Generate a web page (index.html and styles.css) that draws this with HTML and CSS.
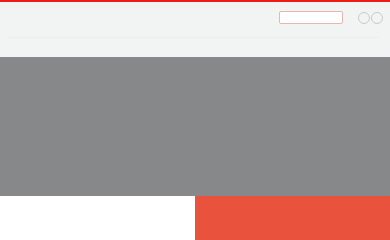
FILE: index.html
```html
<!DOCTYPE html>
<html>
<head>
<meta charset="utf-8">
<link rel="stylesheet" href="styles.css">
</head>
<body>
<header class="header">
  <div class="topbar">
    <input class="search" type="text" aria-label="Search">
    <div class="toggles">
      <span class="circle"></span>
      <span class="circle"></span>
    </div>
  </div>
  <div class="divider"></div>
</header>
<section class="hero"></section>
<section class="split">
  <div class="left"></div>
  <div class="right"></div>
</section>
</body>
</html>
```
FILE: styles.css
```css
* { box-sizing: border-box; }
html, body { margin: 0; padding: 0; }
body {
  width: 390px;
  height: 240px;
  overflow: hidden;
  font-family: "Liberation Sans", Arial, sans-serif;
  background: #ffffff;
}
.header {
  height: 57px;
  background: #f2f3f3;
  border-top: 2px solid #ee1c18;
  display: flex;
  flex-direction: column;
}
.topbar {
  display: flex;
  align-items: center;
  justify-content: flex-end;
  padding: 9px 7px 0 0;
  height: 22px;
}
.search {
  width: 64px;
  height: 13px;
  border: 1px solid #e6b6b1;
  border-radius: 2px;
  background: #ffffff;
  padding: 0;
  margin: 0 15px 0 0;
  outline: none;
}
.toggles {
  display: flex;
  gap: 1px;
}
.circle {
  width: 12px;
  height: 12px;
  border: 1px solid #c9cacb;
  border-radius: 50%;
  display: block;
}
.divider {
  margin: 13px 10px 0 8px;
  height: 1px;
  background: #ecedee;
}
.hero {
  height: 139px;
  background: #87888a;
}
.split {
  display: flex;
  height: 44px;
}
.left {
  flex: 0 0 195px;
  background: #ffffff;
}
.right {
  flex: 1;
  background: #e9523c;
}
```
